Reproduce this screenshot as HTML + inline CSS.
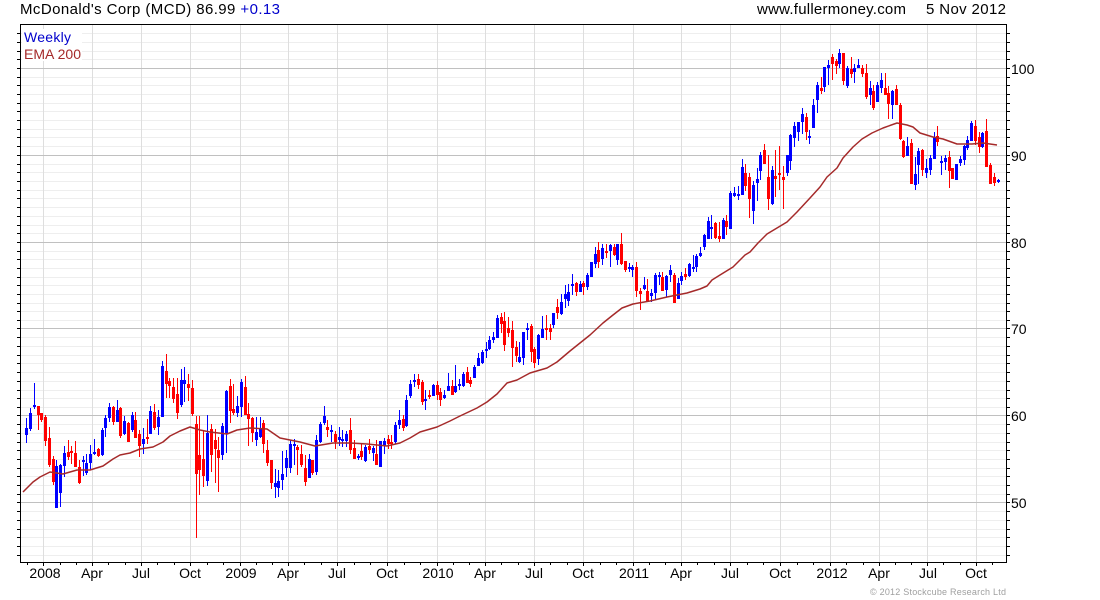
<!DOCTYPE html>
<html lang="en">
<head>
<meta charset="utf-8">
<title>McDonald's Corp (MCD)</title>
<style>
html,body{margin:0;padding:0;background:#fff;width:1100px;height:600px;overflow:hidden}
svg{display:block}
text{font-family:"Liberation Sans",Arial,sans-serif;font-size:14px;fill:#000}
.c{shape-rendering:crispEdges;fill:none}
</style>
</head>
<body>
<svg width="1100" height="600" viewBox="0 0 1100 600" xmlns="http://www.w3.org/2000/svg">
<rect width="1100" height="600" fill="#fff"/>
<path class="c" stroke="#eeeeee" d="M20 33.5H1006M20 42.5H1006M20 51.5H1006M20 59.5H1006M20 77.5H1006M20 85.5H1006M20 94.5H1006M20 103.5H1006M20 111.5H1006M20 120.5H1006M20 129.5H1006M20 137.5H1006M20 146.5H1006M20 164.5H1006M20 172.5H1006M20 181.5H1006M20 190.5H1006M20 198.5H1006M20 207.5H1006M20 216.5H1006M20 225.5H1006M20 233.5H1006M20 251.5H1006M20 259.5H1006M20 268.5H1006M20 277.5H1006M20 285.5H1006M20 294.5H1006M20 303.5H1006M20 311.5H1006M20 320.5H1006M20 337.5H1006M20 346.5H1006M20 355.5H1006M20 363.5H1006M20 372.5H1006M20 381.5H1006M20 390.5H1006M20 398.5H1006M20 407.5H1006M20 424.5H1006M20 433.5H1006M20 442.5H1006M20 450.5H1006M20 459.5H1006M20 468.5H1006M20 476.5H1006M20 485.5H1006M20 494.5H1006M20 511.5H1006M20 520.5H1006M20 529.5H1006M20 537.5H1006M20 546.5H1006M20 555.5H1006"/>
<path class="c" stroke="#dedede" d="M43.5 24V562M92.5 24V562M141.5 24V562M190.5 24V562M240.5 24V562M288.5 24V562M337.5 24V562M387.5 24V562M437.5 24V562M485.5 24V562M534.5 24V562M583.5 24V562M633.5 24V562M681.5 24V562M730.5 24V562M780.5 24V562M830.5 24V562M879.5 24V562M927.5 24V562M976.5 24V562"/>
<path class="c" stroke="#c0c0c0" d="M20 68.5H1006M20 155.5H1006M20 242.5H1006M20 328.5H1006M20 415.5H1006M20 502.5H1006"/>
<rect x="22" y="29" width="60" height="32" fill="#fff"/>

<path class="c" stroke="#0000ff" d="M26.5 418V443M30.5 408V431M34.5 383V409M56.5 460V508M60.5 464V507M64.5 446V477M83.5 456V476M86.5 454V475M90.5 445V470M94.5 439V455M102.5 428V456M105.5 415V437M109.5 403V422M117.5 400V422M124.5 416V435M132.5 412V432M143.5 428V454M150.5 406V434M158.5 410V435M162.5 361V417M181.5 369V407M184.5 367V402M207.5 415V486M222.5 423V460M226.5 390V453M237.5 396V417M241.5 379V417M256.5 417V446M260.5 417V438M275.5 469V498M278.5 470V497M282.5 451V490M286.5 450V477M290.5 440V473M294.5 439V465M309.5 454V478M316.5 435V475M320.5 422V443M324.5 406V425M331.5 425V442M339.5 427V446M342.5 430V447M346.5 431V447M358.5 454V460M365.5 445V462M373.5 446V461M380.5 441V467M384.5 438V454M395.5 422V444M399.5 410V429M406.5 395V427M410.5 380V398M414.5 374V387M425.5 390V410M433.5 384V396M444.5 390V399M448.5 373V391M455.5 365V393M459.5 379V390M463.5 372V387M474.5 365V378M478.5 353V366M482.5 350V364M486.5 342V358M489.5 336V350M493.5 332V343M497.5 315V338M519.5 342V363M523.5 332V365M527.5 323V340M538.5 334V365M542.5 316V338M553.5 313V328M561.5 294V315M565.5 285V308M568.5 284V306M572.5 274V295M580.5 281V292M587.5 273V290M591.5 262V277M595.5 247V268M602.5 244V265M610.5 244V267M617.5 244V265M629.5 263V272M632.5 265V277M644.5 277V290M651.5 289V302M655.5 273V300M659.5 272V285M666.5 275V297M670.5 265V282M678.5 278V299M681.5 272V285M689.5 263V277M693.5 255V272M696.5 254V272M700.5 247V257M704.5 234V250M708.5 217V239M711.5 215V239M723.5 218V239M730.5 191V229M734.5 187V197M738.5 186V200M742.5 159V195M753.5 181V224M757.5 168V201M760.5 152V180M772.5 166V205M787.5 155V176M790.5 134V170M794.5 122V147M798.5 122V141M802.5 108V134M809.5 130V144M813.5 99V128M817.5 82V113M824.5 67V92M828.5 60V85M839.5 49V68M847.5 66V88M854.5 64V83M858.5 59V68M870.5 81V105M877.5 82V102M881.5 73V93M892.5 90V119M907.5 137V156M915.5 157V190M918.5 148V184M926.5 159V178M930.5 155V175M934.5 132V159M941.5 156V175M945.5 155V170M956.5 164V180M960.5 156V166M964.5 145V165M967.5 136V150M971.5 121V141M982.5 132V148M998.5 179V183"/>
<path class="c" stroke="#0000ff" stroke-width="3" d="M26.5 428V435M30.5 413V429M34.5 405V407M56.5 466V508M60.5 465V493M64.5 453V466M83.5 460V462M86.5 463V473M90.5 454V463M94.5 452V454M102.5 430V455M105.5 418V428M109.5 407V418M117.5 410V422M124.5 421V434M132.5 415V430M143.5 439V444M150.5 411V434M158.5 417V427M162.5 366V417M181.5 380V405M184.5 380V384M207.5 433V481M222.5 426V455M226.5 391V433M237.5 406V413M241.5 382V407M256.5 432V440M260.5 429V437M275.5 483V487M278.5 481V488M282.5 474V480M286.5 458V468M290.5 444V468M294.5 444V446M309.5 459V478M316.5 440V472M320.5 424V442M324.5 416V423M331.5 430V432M339.5 437V440M342.5 439V441M346.5 434V441M358.5 456V458M365.5 447V461M373.5 448V453M380.5 441V467M384.5 441V446M395.5 425V442M399.5 420V425M406.5 400V426M410.5 384V396M414.5 380V382M425.5 399V401M433.5 385V396M444.5 395V398M448.5 386V391M455.5 386V392M459.5 384V386M463.5 374V386M474.5 367V378M478.5 358V366M482.5 352V363M486.5 349V351M489.5 340V349M493.5 337V340M497.5 318V338M519.5 357V362M523.5 332V358M527.5 328V330M538.5 335V359M542.5 329V338M553.5 313V325M561.5 302V314M565.5 294V299M568.5 292V301M572.5 284V286M580.5 284V292M587.5 275V287M591.5 262V277M595.5 254V264M602.5 248V259M610.5 245V251M617.5 244V260M629.5 267V269M632.5 267V270M644.5 285V289M651.5 293V296M655.5 275V293M659.5 275V277M666.5 276V290M670.5 270V275M678.5 283V299M681.5 276V281M689.5 264V276M693.5 267V269M696.5 256V267M700.5 253V256M704.5 235V247M708.5 221V239M711.5 227V229M723.5 220V239M730.5 193V229M734.5 193V196M738.5 194V196M742.5 167V195M753.5 185V211M757.5 179V183M760.5 155V171M772.5 170V204M787.5 155V173M790.5 135V161M794.5 126V138M798.5 122V132M802.5 114V122M809.5 136V138M813.5 105V128M817.5 85V100M824.5 67V87M828.5 65V68M839.5 53V64M847.5 68V86M854.5 68V72M858.5 65V68M870.5 88V95M877.5 85V102M881.5 80V88M892.5 91V105M907.5 146V156M915.5 174V185M918.5 151V165M926.5 168V173M930.5 158V170M934.5 137V159M941.5 161V163M945.5 158V162M956.5 164V180M960.5 159V163M964.5 146V160M967.5 140V148M971.5 123V141M982.5 133V147M998.5 180V182"/>

<path class="c" stroke="#ff0000" d="M38.5 406V430M41.5 413V422M45.5 415V446M49.5 427V467M53.5 456V485M68.5 440V460M71.5 446V464M75.5 441V467M79.5 460V484M98.5 448V457M113.5 406V425M120.5 407V438M128.5 422V442M135.5 412V438M139.5 430V457M147.5 419V444M154.5 404V430M166.5 354V398M169.5 378V398M173.5 378V403M177.5 378V419M188.5 374V401M192.5 380V416M196.5 416V538M199.5 416V495M203.5 430V487M211.5 424V472M215.5 429V483M218.5 437V492M230.5 379V423M233.5 384V415M245.5 376V415M248.5 403V446M252.5 417V442M263.5 420V453M267.5 440V466M271.5 460V489M297.5 445V475M301.5 445V467M305.5 455V486M312.5 460V475M327.5 420V437M335.5 431V449M350.5 418V454M354.5 440V459M361.5 444V460M369.5 439V454M376.5 440V465M388.5 435V449M391.5 435V449M403.5 415V431M418.5 374V389M422.5 380V405M429.5 390V399M437.5 381V400M440.5 388V406M452.5 380V395M467.5 367V383M470.5 377V387M501.5 313V333M504.5 312V351M508.5 317V337M512.5 321V367M516.5 341V362M531.5 324V362M534.5 347V368M546.5 315V340M550.5 324V340M557.5 299V319M576.5 282V296M583.5 281V295M598.5 242V268M606.5 244V258M614.5 244V256M621.5 233V265M625.5 261V272M636.5 262V297M640.5 288V310M647.5 279V301M662.5 272V291M674.5 273V303M685.5 268V280M715.5 222V239M719.5 222V242M726.5 215V235M745.5 164V191M749.5 173V218M764.5 144V164M768.5 155V210M775.5 150V197M779.5 146V190M783.5 166V209M806.5 113V140M821.5 77V94M832.5 54V80M836.5 59V74M843.5 53V85M851.5 57V78M862.5 65V77M866.5 64V99M873.5 85V110M885.5 73V95M888.5 86V119M896.5 85V105M900.5 103V140M903.5 140V158M911.5 139V184M922.5 149V176M937.5 126V146M949.5 151V188M952.5 168V179M975.5 120V145M979.5 132V153M986.5 119V167M990.5 163V184M994.5 173V186"/>
<path class="c" stroke="#ff0000" stroke-width="3" d="M38.5 406V415M41.5 413V420M45.5 417V441M49.5 438V465M53.5 459V482M68.5 452V457M71.5 451V453M75.5 453V467M79.5 467V483M98.5 449V456M113.5 407V422M120.5 408V436M128.5 423V442M135.5 420V438M139.5 434V446M147.5 437V439M154.5 412V428M166.5 371V384M169.5 381V386M173.5 387V399M177.5 394V413M188.5 384V388M192.5 388V414M196.5 424V474M199.5 455V470M203.5 459V476M211.5 429V455M215.5 440V449M218.5 450V458M230.5 386V411M233.5 409V413M245.5 387V415M248.5 414V419M252.5 418V433M263.5 423V444M267.5 450V463M271.5 460V483M297.5 447V450M301.5 454V465M305.5 468V482M312.5 460V473M327.5 427V430M335.5 434V442M350.5 430V450M354.5 448V459M361.5 451V457M369.5 446V450M376.5 454V465M388.5 439V444M391.5 442V444M403.5 419V428M418.5 379V385M422.5 382V402M429.5 395V397M437.5 385V395M440.5 392V400M452.5 386V395M467.5 372V383M470.5 380V384M501.5 317V324M504.5 321V345M508.5 328V333M512.5 330V348M516.5 347V356M531.5 326V352M534.5 349V363M546.5 328V330M550.5 328V332M557.5 307V313M576.5 283V292M583.5 283V287M598.5 250V262M606.5 251V253M614.5 247V255M621.5 244V264M625.5 261V270M636.5 267V291M640.5 291V294M647.5 291V301M662.5 277V291M674.5 275V303M685.5 274V277M715.5 223V238M719.5 236V239M726.5 221V227M745.5 173V186M749.5 177V199M764.5 150V164M768.5 177V199M775.5 176V179M779.5 173V175M783.5 177V180M806.5 117V132M821.5 88V91M832.5 57V64M836.5 61V66M843.5 53V81M851.5 69V74M862.5 68V74M866.5 73V97M873.5 91V108M885.5 88V95M888.5 93V104M896.5 89V105M900.5 105V139M903.5 141V157M911.5 143V184M922.5 150V170M937.5 136V142M949.5 157V171M952.5 168V179M975.5 126V141M979.5 137V147M986.5 131V167M990.5 165V184M994.5 177V183"/>

<polyline fill="none" stroke="#a52a2a" stroke-width="1.5" stroke-linejoin="round" points="23,492 28,487 33,482 40,477 50,472 63,474 77,470 90,470 103,466 113,459 120,455 130,453 140,449 153,447 163,442 170,436 180,431 190,427 200,430 210,432 227,434 237,430 250,428 267,429 280,438 300,442 315,446 333,443 350,443 367,444 387,446 400,443 410,438 420,432 437,427 450,421 460,416 477,408 487,402 497,394 507,383 517,380 530,373 547,368 557,362 570,351 590,335 603,323 613,315 622,308 633,304 650,301 667,297 687,293 700,289 707,286 712,280 720,275 733,267 745,255 750,252 758,243 767,234 777,228 787,222 797,212 810,198 820,187 827,177 837,168 843,158 853,147 862,139 872,133 883,128 897,123 907,125 913,127 920,133 933,137 943,139 957,144 972,144 983,143 997,145"/>

<rect class="c" x="20.5" y="24.5" width="986" height="538" stroke="#000"/>
<path class="c" stroke="#000" d="M17 33.5h3M17 42.5h3M17 51.5h3M17 59.5h3M17 68.5h3M17 77.5h3M17 85.5h3M17 94.5h3M17 103.5h3M17 111.5h3M17 120.5h3M17 129.5h3M17 137.5h3M17 146.5h3M17 155.5h3M17 164.5h3M17 172.5h3M17 181.5h3M17 190.5h3M17 198.5h3M17 207.5h3M17 216.5h3M17 225.5h3M17 233.5h3M17 242.5h3M17 251.5h3M17 259.5h3M17 268.5h3M17 277.5h3M17 285.5h3M17 294.5h3M17 303.5h3M17 311.5h3M17 320.5h3M17 328.5h3M17 337.5h3M17 346.5h3M17 355.5h3M17 363.5h3M17 372.5h3M17 381.5h3M17 390.5h3M17 398.5h3M17 407.5h3M17 415.5h3M17 424.5h3M17 433.5h3M17 442.5h3M17 450.5h3M17 459.5h3M17 468.5h3M17 476.5h3M17 485.5h3M17 494.5h3M17 502.5h3M17 511.5h3M17 520.5h3M17 529.5h3M17 537.5h3M17 546.5h3M17 555.5h3"/>
<path class="c" stroke="#000" d="M1007 33.5h3M1007 42.5h3M1007 51.5h3M1007 59.5h3M1007 68.5h3M1007 77.5h3M1007 85.5h3M1007 94.5h3M1007 103.5h3M1007 111.5h3M1007 120.5h3M1007 129.5h3M1007 137.5h3M1007 146.5h3M1007 155.5h3M1007 164.5h3M1007 172.5h3M1007 181.5h3M1007 190.5h3M1007 198.5h3M1007 207.5h3M1007 216.5h3M1007 225.5h3M1007 233.5h3M1007 242.5h3M1007 251.5h3M1007 259.5h3M1007 268.5h3M1007 277.5h3M1007 285.5h3M1007 294.5h3M1007 303.5h3M1007 311.5h3M1007 320.5h3M1007 328.5h3M1007 337.5h3M1007 346.5h3M1007 355.5h3M1007 363.5h3M1007 372.5h3M1007 381.5h3M1007 390.5h3M1007 398.5h3M1007 407.5h3M1007 415.5h3M1007 424.5h3M1007 433.5h3M1007 442.5h3M1007 450.5h3M1007 459.5h3M1007 468.5h3M1007 476.5h3M1007 485.5h3M1007 494.5h3M1007 502.5h3M1007 511.5h3M1007 520.5h3M1007 529.5h3M1007 537.5h3M1007 546.5h3M1007 555.5h3"/>
<path class="c" stroke="#000" d="M27.5 563v2M43.5 563v3M60.5 563v2M76.5 563v2M92.5 563v3M108.5 563v2M125.5 563v2M141.5 563v3M157.5 563v2M174.5 563v2M190.5 563v3M207.5 563v2M223.5 563v2M240.5 563v3M256.5 563v2M272.5 563v2M288.5 563v3M304.5 563v2M321.5 563v2M337.5 563v3M354.5 563v2M370.5 563v2M387.5 563v3M404.5 563v2M420.5 563v2M437.5 563v3M453.5 563v2M469.5 563v2M485.5 563v3M501.5 563v2M518.5 563v2M534.5 563v3M550.5 563v2M567.5 563v2M583.5 563v3M600.5 563v2M616.5 563v2M633.5 563v3M649.5 563v2M665.5 563v2M681.5 563v3M697.5 563v2M714.5 563v2M730.5 563v3M747.5 563v2M763.5 563v2M780.5 563v3M797.5 563v2M813.5 563v2M830.5 563v3M846.5 563v2M863.5 563v2M879.5 563v3M895.5 563v2M911.5 563v2M927.5 563v3M943.5 563v2M960.5 563v2M976.5 563v3M992.5 563v2"/>

<text x="20" y="14" style="font-size:15px" textLength="260">McDonald's Corp (MCD) 86.99 <tspan fill="#0000cc">+0.13</tspan></text>
<text x="757" y="14" style="font-size:15px" textLength="149">www.fullermoney.com</text>
<text x="926" y="14" style="font-size:15px" textLength="80">5 Nov 2012</text>
<text x="24" y="42" style="fill:#0000cc" textLength="47">Weekly</text>
<text x="24" y="59" style="fill:#a52a2a" textLength="57">EMA 200</text>

<text x="1011" y="74">100</text>
<text x="1011" y="161">90</text>
<text x="1011" y="248">80</text>
<text x="1011" y="334">70</text>
<text x="1011" y="421">60</text>
<text x="1011" y="508">50</text>

<g text-anchor="middle">
<text x="45" y="578">2008</text><text x="92" y="578">Apr</text><text x="141" y="578">Jul</text><text x="190" y="578">Oct</text>
<text x="241" y="578">2009</text><text x="288" y="578">Apr</text><text x="337" y="578">Jul</text><text x="387" y="578">Oct</text>
<text x="438" y="578">2010</text><text x="485" y="578">Apr</text><text x="534" y="578">Jul</text><text x="583" y="578">Oct</text>
<text x="634" y="578">2011</text><text x="681" y="578">Apr</text><text x="730" y="578">Jul</text><text x="780" y="578">Oct</text>
<text x="832" y="578">2012</text><text x="879" y="578">Apr</text><text x="928" y="578">Jul</text><text x="976" y="578">Oct</text>
</g>
<text x="870" y="595" style="font-size:9px;fill:#a0a0a0" textLength="136">© 2012 Stockcube Research Ltd</text>
</svg>
</body>
</html>
